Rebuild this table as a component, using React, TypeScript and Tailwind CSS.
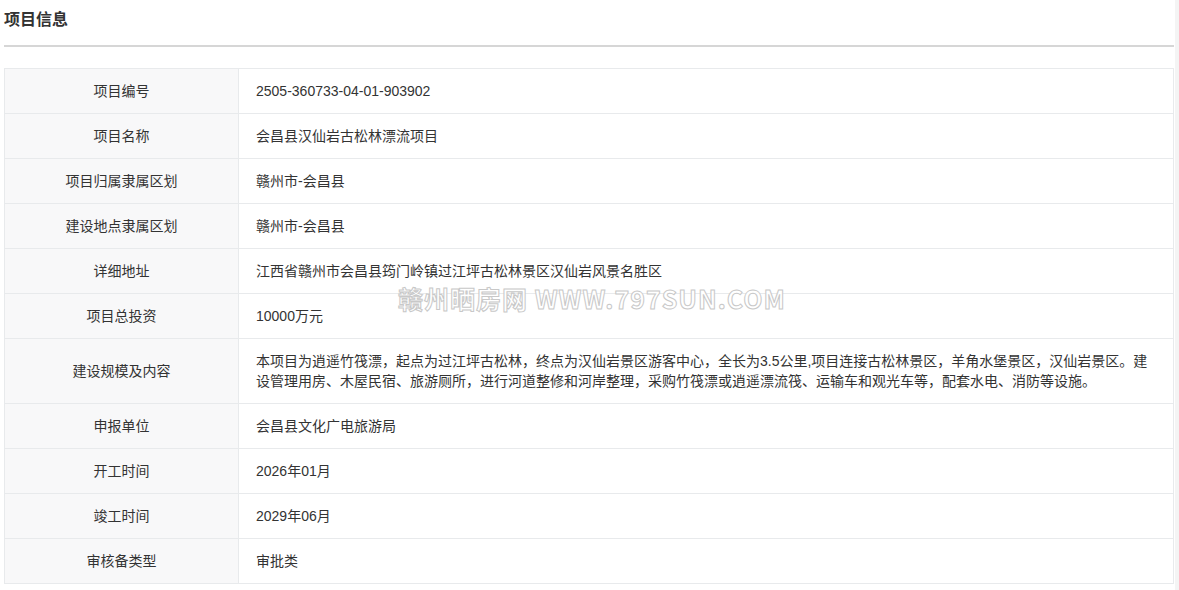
import React from "react";

const rows: [string, string][] = [
  ["项目编号", "2505-360733-04-01-903902"],
  ["项目名称", "会昌县汉仙岩古松林漂流项目"],
  ["项目归属隶属区划", "赣州市-会昌县"],
  ["建设地点隶属区划", "赣州市-会昌县"],
  ["详细地址", "江西省赣州市会昌县筠门岭镇过江坪古松林景区汉仙岩风景名胜区"],
  ["项目总投资", "10000万元"],
  [
    "建设规模及内容",
    "本项目为逍遥竹筏漂，起点为过江坪古松林，终点为汉仙岩景区游客中心，全长为3.5公里,项目连接古松林景区，羊角水堡景区，汉仙岩景区。建设管理用房、木屋民宿、旅游厕所，进行河道整修和河岸整理，采购竹筏漂或逍遥漂流筏、运输车和观光车等，配套水电、消防等设施。",
  ],
  ["申报单位", "会昌县文化广电旅游局"],
  ["开工时间", "2026年01月"],
  ["竣工时间", "2029年06月"],
  ["审核备类型", "审批类"],
];

export default function App() {
  return (
    <div
      className="relative w-[1179px] h-[590px] bg-white overflow-hidden text-[#333]"
      style={{ fontFamily: '"Liberation Sans", "Noto Sans CJK SC", sans-serif' }}
    >
      <div className="pl-[4px] pr-[5px]">
        <div className="h-[45px] flex items-center text-[16px] font-bold text-[#333] pb-[6px]">项目信息</div>
        <div className="h-[2px] bg-[#d6d6d6]" />
        <div className="h-[21px]" />
        <div className="border-t border-l border-r border-[#e8eaec]">
          {rows.map(([k, v], i) => (
            <div
              key={k}
              className={`flex border-b border-[#e8eaec] ${i === 6 ? "min-h-[65px]" : "min-h-[45px]"}`}
            >
              <div className="w-[234px] shrink-0 bg-[#f8f8f9] border-r border-[#e8eaec] flex items-center justify-center text-[14px]">
                {k}
              </div>
              <div className="flex-1 flex items-center pl-[17px] pr-[22px] text-[14px] leading-[20px]">
                {v}
              </div>
            </div>
          ))}
        </div>
      </div>
      <div className="absolute left-[1175px] top-[0px] w-[4px] h-[590px] bg-[#f4f4f4]" />
      <div
        className="absolute left-[398px] top-[280px] text-[25px] font-bold tracking-[1px] text-white [-webkit-text-stroke:1px_#c8c8c8] whitespace-nowrap"
        style={{ fontFamily: '"Noto Sans CJK SC", "Liberation Sans", sans-serif' }}
      >
        赣州晒房网 WWW.797SUN.COM
      </div>
    </div>
  );
}
